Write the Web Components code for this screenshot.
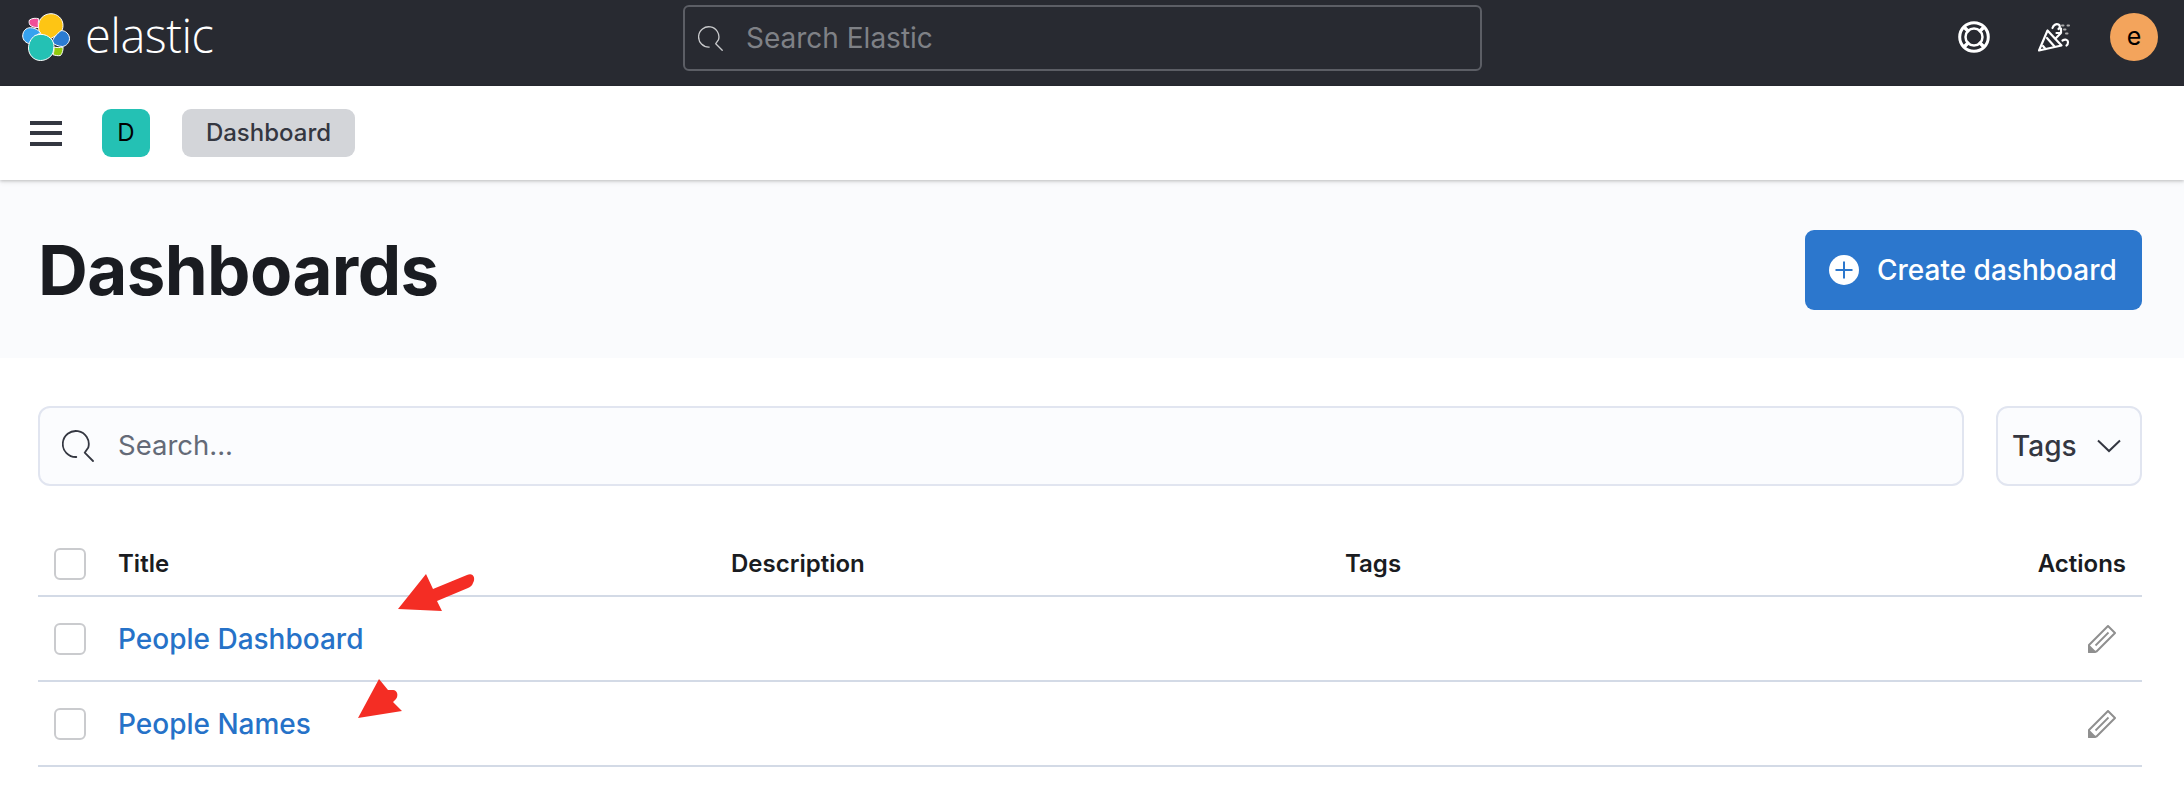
<!DOCTYPE html>
<html><head><meta charset="utf-8">
<style>
html,body{margin:0;padding:0;background:#fff;font-family:Inter,"Liberation Sans",sans-serif;overflow:hidden}
body{width:2184px;height:786px;position:relative}
</style></head><body>
<top-bar></top-bar>
<nav-bar></nav-bar>
<page-head></page-head>
<list-tools></list-tools>
<dash-table>
  <dash-row kind="head"></dash-row>
  <dash-row name="People Dashboard"></dash-row>
  <dash-row name="People Names"></dash-row>
</dash-table>
<red-arrows></red-arrows>
<script>
function def(tag, html, init){
  customElements.define(tag, class extends HTMLElement{
    constructor(){super();this.attachShadow({mode:'open'}).innerHTML=html;}
    connectedCallback(){ if(init) init(this); }
  });
}
const SEARCH=(c,s,w)=>`<svg width="${s}" height="${s}" viewBox="0 0 32 32" fill="none" stroke="${c}" stroke-width="${w}" stroke-linecap="round" stroke-linejoin="round"><path d="M14.300 27A13 13 0 1 1 26.300 17.500L22.700 22.700L31 31"/></svg>`;
def('top-bar',`<style>
:host{display:flex;align-items:center;height:86px;padding-bottom:12px;box-sizing:border-box;background:#282a31;position:relative;color:#fff}
.logo{display:flex;align-items:center;margin-left:22px;width:650px;flex:none}
.word{font:300 47px/1 "Open Sans",sans-serif;color:#fff;margin-left:15px;margin-top:-3px;letter-spacing:-.5px}
.search{flex:none;box-sizing:border-box;width:799px;height:66px;margin-left:11px;border:2px solid #5c5e65;border-radius:6px;display:flex;align-items:center;padding-left:13px;gap:23px;margin-top:2px;
font:400 28px/1 Inter,sans-serif;color:#7f8186}
.right{position:absolute;right:0;top:0;height:74px;display:flex;align-items:center}
.av{width:48px;height:48px;border-radius:50%;background:#f3a45c;color:#000;display:flex;align-items:center;justify-content:center;font:400 25px/1 Inter,sans-serif;margin-left:40px;margin-right:26px;padding-bottom:1px;box-sizing:border-box}
</style>
<div class="logo">
<svg width="48" height="48" viewBox="0 0 48 48">
<g stroke="#fff" stroke-width="1">
<path fill="#fec514" d="M16.500 13C16.500 6 22 .7 29 .7c6.500 0 12 5 12 11.800 0 3-1 5.500-2.500 7.500L28 26l-10-5.500c-1-2-1.500-4.500-1.500-7.500z"/>
<path fill="#f04e98" d="M7.500 7c2.500-1.800 6.500-2.300 9.500-1-.8 2.500-1 5.500-.5 8.500-3 .3-6.500-.5-8.500-2.500-1-1.500-1.200-3.500-.5-5z"/>
<path fill="#36a2ef" d="M.7 23c0-4.500 3-8.300 7.800-8.300 3 0 6 1.300 8 3l2 2c-2.500 1-5 3.500-6.500 5.500l-3.500 5.500C4 30.500.7 27 .7 23z"/>
<path fill="#2c7cd1" d="M30 29.500c.5-3.500 5-9 9-11.800 4.500-.5 8.500 3.500 8.500 8 0 3.500-3 7.300-7 7.800-4 0-8-2-10.500-4z"/>
<path fill="#24c1b4" d="M6.500 35c0-5 2.500-9.500 6.500-12.500 4-1.500 8-1.500 11.500 0 3 1.500 6 4 7 7.500.5 2 .5 4.500 0 7-.5 6-6.500 10.500-13 10.500S6.500 42 6.500 35z"/>
<path fill="#93c90e" d="M32 34c2.500.8 5.500.8 9 0 .3 3-.7 6.500-2.500 8.500-2.500.5-5 0-7.500-.8.800-2.500 1.200-5.200 1-7.700z"/>
</g></svg>
<span class="word">elastic</span></div>
<div class="search">${SEARCH('#c9cacc',25,1.7)}<span>Search Elastic</span></div>
<div class="right">
<svg width="32" height="32" viewBox="0 0 32 32" fill="none" stroke="#fff"><circle cx="16" cy="16" r="14.300" stroke-width="3"/><circle cx="16" cy="16" r="8.500" stroke-width="2.500"/><path stroke-width="3.500" d="M6 6l5 5M26 6l-5 5M6 26l5-5M26 26l-5-5"/></svg>
<svg style="margin-left:48px" width="32" height="30" viewBox="0 0 32 30" fill="none" stroke="#fff" stroke-width="2.200" stroke-linejoin="round" stroke-linecap="round"><path d="M9.500 8.500 1 28.500l22.500-5z"/><path d="M5 24l2.500 3M9 16l7.500 8.500M14.500 6c1-3 3.500-4.500 6-3.500 2 1 1.500 3.500 0 4.500M24.500 18.500c2.500-1.500 5.500-1 5.500 1.500 0 1.500-.5 3-1.500 3.500M17.500 16.500 23 11M23 6.500V11h-4.500"/><path stroke-dasharray="1.500 4" stroke="#aaa" stroke-width="2" d="M24 3.500h7M26 7.500h5M28 11.500h3"/></svg>
<div class="av">e</div></div>`);
def('nav-bar',`<style>
:host{display:flex;align-items:center;height:94px;background:#fff;position:relative;box-shadow:0 1px 3px rgba(0,0,0,.2),0 3px 5px rgba(0,0,0,.06);z-index:2}
.menu{width:32px;height:25px;margin-left:30px;display:flex;flex-direction:column;justify-content:space-between}
.menu i{display:block;height:4px;background:#343741}
.d{margin-left:40px;width:48px;height:48px;border-radius:9px;background:#24c1b4;color:#000;display:flex;align-items:center;justify-content:center;font:400 24px/1 Inter,sans-serif}
.b{margin-left:32px;height:48px;width:173px;border-radius:9px;background:#d3d5d9;color:#343741;display:flex;align-items:center;justify-content:center;font:500 24px/1 Inter,sans-serif}
</style><div class="menu"><i></i><i></i><i></i></div><div class="d">D</div><div class="b">Dashboard</div>`);
def('page-head',`<style>
:host{display:flex;align-items:center;justify-content:space-between;height:178px;background:#fafbfd;padding:2px 42px 0 38px;box-sizing:border-box}
h1{margin:0;font:700 69px/1 Inter,sans-serif;color:#1a1c21;letter-spacing:-.6px}
.btn{box-sizing:border-box;width:337px;height:80px;border-radius:9px;background:#2c77cd;color:#fff;display:flex;align-items:center;padding-left:24px;gap:18px;font:500 28px/1 Inter,sans-serif}
</style><h1>Dashboards</h1><div class="btn"><svg width="30" height="30" viewBox="0 0 30 30"><circle cx="15" cy="15" r="15" fill="#fff"/><path d="M15 6.500v17M6.500 15h17" stroke="#2c77cd" stroke-width="2"/></svg><span>Create dashboard</span></div>`);
def('list-tools',`<style>
:host{display:flex;gap:32px;padding:48px 42px 0 38px}
.s,.t{box-sizing:border-box;height:80px;border:2px solid #e1e5f0;border-radius:12px;background:#fbfcfe;display:flex;align-items:center}
.s{flex:1;padding-left:22px;gap:24px;font:400 27.500px/1 Inter,sans-serif;color:#646a77}
.t{width:146px;padding-left:14px;gap:20px;font:500 28px/1 Inter,sans-serif;color:#343741}
</style><div class="s">${SEARCH('#343741',32,1.8)}<span>Search...</span></div><div class="t"><span>Tags</span><svg width="24" height="14" viewBox="0 0 24 14" fill="none" stroke="#343741" stroke-width="2"><path d="M1 1.500 12 12 23 1.500"/></svg></div>`);
def('dash-table',`<style>:host{display:block;margin:29px 42px 0 38px}</style><slot></slot>`);
const PEN=`<svg width="28" height="28" viewBox="0 0 28 28" fill="none" stroke="#8f8f8f" stroke-width="2" stroke-linejoin="round"><path d="M20 1 27 8 8.500 26.500 1 27 1 20z"/><path d="M7.500 20.500 20.500 7.500" stroke-width="1.800"/><path d="M1 21 7 27 1 27z" fill="#8f8f8f"/></svg>`;
def('dash-row',`<style>
:host{display:grid;grid-template-columns:80px 613px 614px 1fr auto;align-items:center;height:85px;box-sizing:border-box;border-bottom:2px solid #d3dae6;font:500 28px/1 Inter,sans-serif;color:#2672c8}
:host([kind=head]){height:82px;padding-top:17px;font:600 24px/1 Inter,sans-serif;color:#1a1c21}
.c{box-sizing:border-box;width:32px;height:32px;margin-left:16px;border:2px solid #cacbce;border-radius:6px;background:#fff}
.a{padding-right:16px;display:flex;justify-content:flex-end}
</style><div class="c"></div><div id="n"></div><div id="d"></div><div id="t"></div><div class="a" id="a"></div>`, el=>{
  const r=el.shadowRoot;
  if(el.getAttribute('kind')==='head'){
    r.getElementById('n').textContent='Title';r.getElementById('d').textContent='Description';r.getElementById('t').textContent='Tags';r.getElementById('a').textContent='Actions';
  } else {
    r.getElementById('n').textContent=el.getAttribute('name');r.getElementById('a').innerHTML=PEN;
    r.getElementById('a').style.paddingRight='26px';
  }
});
def('red-arrows',`<style>:host{position:absolute;left:0;top:0;width:2184px;height:786px;pointer-events:none;z-index:5}
svg{position:absolute;left:0;top:0}</style>
<svg width="2184" height="786" viewBox="0 0 2184 786"><g fill="#f42d24">
<path d="M398 609 426 574 433 589 467 575C473 572 476 578 473 583 472 586 470 587 468 588L437 601 442 611z"/>
<path d="M358 718 379 679 388 690 392 690C397 689 399 695 396 699L393 702 402 711z"/>
</g></svg>`);
</script>
</body></html>
